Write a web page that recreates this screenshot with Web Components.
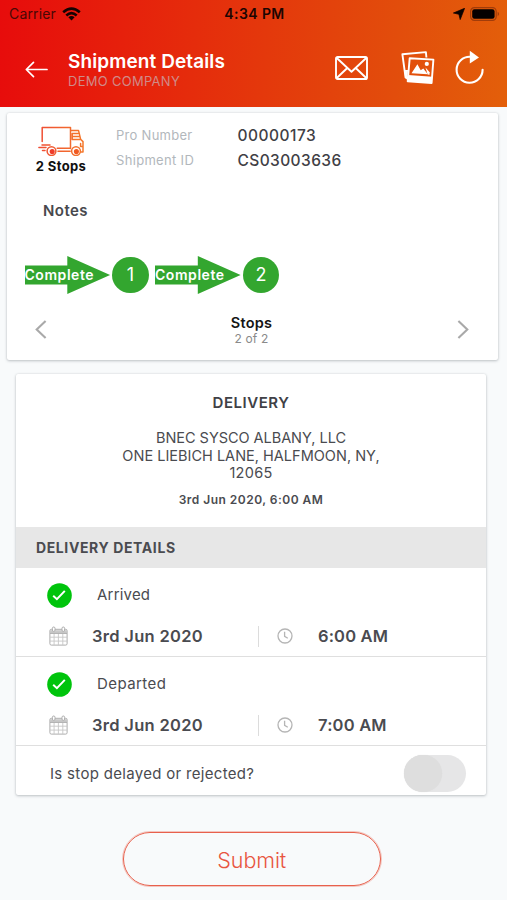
<!DOCTYPE html>
<html lang="en">
<head>
<meta charset="utf-8">
<title>Shipment Details</title>
<style>
  html, body { margin: 0; padding: 0; background: #f8fafb; }
  body { width: 507px; height: 900px; overflow: hidden; font-family: Inter, "Liberation Sans", sans-serif; color: #4a4b50; }
</style>
</head>
<body>
<shipment-screen></shipment-screen>
<script>
const define = (name, html, setup) => {
  const template = document.createElement('template');
  template.innerHTML = html;
  customElements.define(name, class extends HTMLElement {
    constructor() {
      super();
      this.attachShadow({ mode: 'open' }).append(template.content.cloneNode(true));
    }
    connectedCallback() { if (setup) setup(this, this.shadowRoot); }
  });
};

/* Single line of text: size, weight, letter spacing and line height as attributes */
define('ui-text', `
<style>
  :host { display: block; white-space: nowrap; flex: none; }
</style><slot></slot>`, el => {
  const a = n => el.getAttribute(n);
  el.style.fontSize = a('size') + 'px';
  el.style.fontWeight = a('weight') || 400;
  el.style.letterSpacing = (a('track') || 0) + 'px';
  el.style.lineHeight = (a('line') || 20) + 'px';
  if (a('color')) el.style.color = a('color');
});

define('status-bar', `
<style>
  :host { display: grid; grid-template-columns: 1fr auto 1fr; height: 28px; align-items: center; padding: 0 7px 0 9px; color: #1c0502; }
  .left { display: flex; align-items: center; gap: 6px; }
  .right { display: flex; align-items: center; justify-content: flex-end; gap: 5px; }
  svg { display: block; }
</style>
<div class="left">
  <ui-text size="14" track="0.15" color="#4a0805">Carrier</ui-text>
  <svg width="19" height="14" viewBox="0 0 19 14"><g fill="none" stroke="#140302" stroke-width="2.6"><path d="M1.2 5.3 Q9.5 -2.1 17.8 5.3"/><path d="M4.3 8.5 Q9.5 3.9 14.7 8.5"/></g><path d="M6.4 10.3 Q9.5 7.9 12.6 10.3 L9.5 13.5Z" fill="#140302"/></svg>
</div>
<ui-text size="14" weight="600" track="0.4">4:34 PM</ui-text>
<div class="right">
  <svg width="12" height="12" viewBox="0 0 12 12"><path d="M11.6 .3 L7.2 11.6 L5.9 6.3 L.4 5Z" fill="#0a0200" stroke="#0a0200" stroke-width=".7" stroke-linejoin="round"/></svg>
  <svg width="30" height="14" viewBox="0 0 30 14"><rect x=".6" y=".6" width="25.6" height="12.8" rx="3.8" fill="none" stroke="#a13c0a" stroke-width="1.2"/><rect x="2.2" y="2.2" width="22.4" height="9.6" rx="2.2" fill="#050000"/><path d="M27.7 4.8 Q30.5 7 27.7 9.2Z" fill="#a13c0a"/></svg>
</div>`);

define('app-header', `
<style>
  :host { display: block; height: 106.5px; box-sizing: border-box; background: linear-gradient(93deg, #e70c0c 0%, #e6200c 24%, #e4380c 52%, #e24d0c 78%, #e35f0a 100%); }
  .bar { display: flex; height: 78px; box-sizing: border-box; padding: 22px 22px 0 25px; align-items: flex-start; }
  .back { margin: 11px 20px 0 0; }
  .titles { flex: 1; padding-top: 1px; }
  .icons { display: flex; align-items: flex-start; }
  svg { display: block; }
  .mail { margin-top: 6px; }
  .photos { margin: 1px 0 0 33px; }
  .reload { margin: 0 0 0 20px; }
</style>
<status-bar></status-bar>
<div class="bar">
  <svg class="back" width="23" height="17" viewBox="0 0 23 17" fill="none" stroke="#fff" stroke-width="1.7" stroke-linecap="round" stroke-linejoin="round"><path d="M22 8.5H1.5M8.5 1.3L1.3 8.5L8.5 15.7"/></svg>
  <div class="titles">
    <ui-text size="19" weight="600" track="0.1" line="22" color="#fff">Shipment Details</ui-text>
    <ui-text size="13" track="0.28" line="17" color="#d08a88">DEMO COMPANY</ui-text>
  </div>
  <div class="icons">
    <svg class="mail" width="33" height="24" viewBox="0 0 33 24" fill="none" stroke="#fff" stroke-width="1.9" stroke-linejoin="round"><rect x="1" y="1" width="31" height="22" rx="1.6"/><path d="M1.5 1.8L16.5 15.8L31.5 1.8M1.5 22.3L12.3 12M31.5 22.3L20.7 12"/></svg>
    <svg class="photos" width="34" height="34" viewBox="0 0 34 34"><path d="M7.5 26.5 L4.6 26.6 L1.4 3.3 L24.9 1.1 L25.4 6.5" fill="none" stroke="#fff" stroke-width="1.9" stroke-linejoin="round"/><path d="M3.5 19 L7 19 L6.3 29 L4 26.6Z" fill="#fff"/><path d="M8.7 7.2 L32.4 8.6 L30.6 32 L6.7 30.4Z" fill="none" stroke="#fff" stroke-width="1.9" stroke-linejoin="round"/><path d="M7.2 24 L31.3 25.7 L30.7 32 L6.7 30.4Z" fill="#fff"/><path d="M10.5 22.2 L16.4 13.3 L19.7 19.2 L22.3 17.6 L26.8 23.3Z" fill="#fff"/><path d="M24.5 16.6 L28.7 21.3 L28.4 24 L26.5 23.3Z" fill="#fff"/><circle cx="25.8" cy="12.9" r="2.1" fill="#fff"/></svg>
    <svg class="reload" width="30" height="34" viewBox="0 0 30 34"><path d="M15.2 6.8 A13 13 0 1 0 27.6 19.8" fill="none" stroke="#fff" stroke-width="2.1" stroke-linecap="round"/><path d="M14.8 .8 L24 7.4 L14.8 13.4Z" fill="#fff"/></svg>
  </div>
</div>`);

define('ui-card', `
<style>
  :host { display: block; box-sizing: border-box; background: #fff; border-radius: 2px; box-shadow: 0 1px 3px rgba(40,50,60,.26), 0 0 2px rgba(40,50,60,.12); }
</style><slot></slot>`);

define('truck-icon', `
<style>:host { display: block; } svg { display: block; }</style>
<svg width="47" height="30" viewBox="0 0 47 30" fill="none" stroke="url(#g)" stroke-width="1.5" stroke-linecap="round" stroke-linejoin="round">
  <defs><linearGradient id="g" gradientUnits="userSpaceOnUse" x1="0" y1="0" x2="47" y2="0"><stop offset="0" stop-color="#ef4b33"/><stop offset="1" stop-color="#f47a2c"/></linearGradient></defs>
  <path d="M4.2 15.5V1.4H32.5V22.6M32.5 4.4H40.5L42.6 13.2L45 15.6V26H42.6M34.2 7.6H40M34.2 7.6V13.6H42.4M34.5 10.4H40.8M42.6 17.5V20.5H45"/>
  <path d="M.9 21.6H8M4 18.9H12M4.5 24.4H7M19.2 22.2H32M20 25.2H32.2"/>
  <circle cx="13.5" cy="25.1" r="4.4"/><circle cx="38" cy="25.1" r="4.4"/>
  <circle cx="14.2" cy="25.6" r="1.8" fill="#ef3d2c" stroke="#ef3d2c"/><circle cx="38.4" cy="25.6" r="1.8" fill="#f05a22" stroke="#f05a22"/>
</svg>`);

/* One completed stop: arrow with its label, then the numbered disc */
define('stop-step', `
<style>
  :host { display: flex; align-items: center; gap: 2px; width: 124.5px; height: 38px; }
  .arrow { display: flex; width: 85.6px; height: 38px; align-items: center; background: #33a62f; clip-path: polygon(0 25%, 50% 25%, 50% 0, 100% 50%, 50% 100%, 50% 75%, 0 75%); }
  .disc { display: flex; width: 36.8px; height: 36.8px; border-radius: 50%; background: #33a62f; align-items: center; justify-content: center; }
</style>
<div class="arrow"><ui-text size="14" weight="600" track="0.55" line="22" color="#fff">Complete</ui-text></div>
<div class="disc"><ui-text size="18" color="#fff"><slot></slot></ui-text></div>`);

define('chevron-icon', `
<style>:host { display: block; } :host([dir="right"]) { transform: scaleX(-1); } svg { display: block; }</style>
<svg width="12" height="19" viewBox="0 0 12 19" fill="none" stroke="#a9a9a9" stroke-width="2.1"><path d="M10.6 1L1.7 9.5L10.6 18"/></svg>`);

define('summary-card', `
<style>
  :host { display: block; height: 247px; }
  .top { display: flex; height: 65px; box-sizing: border-box; padding: 13px 0 0 28.5px; }
  .stops { display: flex; flex-direction: column; align-items: center; width: 51px; }
  dl { display: grid; grid-template-columns: 121.5px auto; margin: -3px 0 0 29.5px; grid-auto-rows: 25px; align-items: center; }
  dd, dt { margin: 0; }
  dt { padding-bottom: 1px; }
  .notes { padding: 23px 0 0 36px; height: 56px; box-sizing: border-box; }
  .steps { display: flex; gap: 6px; padding: 22px 0 0 17.5px; }
  .nav { display: flex; justify-content: space-between; padding: 21px 28.5px 0 27.5px; }
  chevron-icon { margin-top: 4.5px; }
  .mid { display: flex; flex-direction: column; align-items: center; margin-right: 1px; }
</style>
<div class="top">
  <div class="stops"><truck-icon></truck-icon><ui-text size="13" weight="700" track="0.35" line="21" color="#111">2 Stops</ui-text></div>
  <dl>
    <dt><ui-text size="13" track="0.28" color="#b2b7bc">Pro Number</ui-text></dt><dd><ui-text size="15.5" weight="500" track="0.5" color="#3f4045">00000173</ui-text></dd>
    <dt><ui-text size="13" track="0.32" color="#b2b7bc">Shipment ID</ui-text></dt><dd><ui-text size="15.5" weight="500" track="0.4" color="#3f4045">CS03003636</ui-text></dd>
  </dl>
</div>
<div class="notes"><ui-text size="15" weight="600" track="0.45" color="#47484d">Notes</ui-text></div>
<div class="steps"><stop-step>1</stop-step><stop-step>2</stop-step></div>
<div class="nav">
  <chevron-icon></chevron-icon>
  <div class="mid"><ui-text size="14.5" weight="600" track="0.2" line="16" color="#151515">Stops</ui-text><ui-text size="12" track="0.15" line="16" color="#8a8a8a">2 of 2</ui-text></div>
  <chevron-icon dir="right"></chevron-icon>
</div>`);

define('check-badge', `
<style>:host { display: block; } svg { display: block; }</style>
<svg width="25" height="25" viewBox="0 0 25 25"><circle cx="12.5" cy="12.5" r="12.3" fill="#00c40c"/><path d="M6.2 12.8L9.9 16.2L17.8 7.9" fill="none" stroke="#fff" stroke-width="2"/></svg>`);

define('calendar-icon', `
<style>:host { display: block; } svg { display: block; }</style>
<svg width="19" height="20" viewBox="0 0 19 20" fill="none" stroke="#adadad" stroke-width="1"><rect x=".9" y="3.3" width="17.2" height="15.8" rx="1.4"/><path d="M1 4.2H18V7.2H1Z" fill="#c9c9c9" stroke="none"/><path d="M1 11.2H18M1 15.1H18M5.1 7.5V19M9.4 7.5V19M13.8 7.5V19" stroke="#c6c6c6" stroke-width=".9"/><path d="M1 7.4H18"/><rect x="3.4" y="1" width="2.6" height="4.4" rx="1.3" fill="#fff"/><rect x="13" y="1" width="2.6" height="4.4" rx="1.3" fill="#fff"/></svg>`);

define('clock-icon', `
<style>:host { display: block; } svg { display: block; }</style>
<svg width="16" height="16" viewBox="0 0 16 16" fill="none" stroke="#b5b5b5" stroke-width="1.3"><circle cx="8" cy="8" r="7"/><path d="M7.6 3.8V8.3L10.8 10.2"/></svg>`);

/* A stop event: a checked title row above its date and time */
define('stop-event', `
<style>
  :host { display: block; height: 89px; box-sizing: border-box; border-bottom: 1.5px solid #dfdfdf; padding-top: 14px; }
  .title { display: flex; align-items: center; height: 26px; padding-left: 31px; gap: 25px; }
  .when { display: grid; grid-template-columns: 43px 165.5px 20px 40.5px auto; align-items: center; height: 26px; margin-top: 15px; padding-left: 33px; }
  .rule { width: 1px; height: 21px; background: #dcdcdc; }
  clock-icon { margin-left: -.5px; }
</style>
<div class="title"><check-badge></check-badge><slot name="title"></slot></div>
<div class="when"><calendar-icon></calendar-icon><slot name="date"></slot><span class="rule"></span><clock-icon></clock-icon><slot name="time"></slot></div>`);

define('ui-toggle', `
<style>
  :host { display: flex; width: 62px; height: 37.5px; border-radius: 19px; background: #e6e6e7; }
  .knob { width: 37.5px; height: 37.5px; border-radius: 50%; background: #dedede; box-shadow: 0 0 1px #dcdcdc; }
</style><div class="knob"></div>`);

define('delivery-card', `
<style>
  :host { display: block; height: 421px; }
  .head { display: flex; flex-direction: column; align-items: center; height: 153px; box-sizing: border-box; padding-top: 19px; }
  .addr { display: flex; flex-direction: column; align-items: center; margin: 16px 0 9px; }
  .band { display: flex; height: 41px; align-items: center; padding-left: 20px; background: #e7e7e7; }
  .ask { display: flex; align-items: center; justify-content: space-between; height: 55px; padding: 0 20px 0 34px; }
</style>
<div class="head">
  <ui-text size="15" weight="600" track="0.52" color="#404146">DELIVERY</ui-text>
  <div class="addr">
    <ui-text size="14.5" track="-0.04" line="17.5">BNEC SYSCO ALBANY, LLC</ui-text>
    <ui-text size="14.5" track="0.01" line="17.5">ONE LIEBICH LANE, HALFMOON, NY,</ui-text>
    <ui-text size="14.5" track="0.3" line="17.5">12065</ui-text>
  </div>
  <ui-text size="12" weight="600" track="0.48" line="18">3rd Jun 2020, 6:00 AM</ui-text>
</div>
<div class="band"><ui-text size="14" weight="700" track="0.61">DELIVERY DETAILS</ui-text></div>
<stop-event>
  <ui-text slot="title" size="15" track="0.2" line="22">Arrived</ui-text>
  <ui-text slot="date" size="16.5" weight="600" track="0.3">3rd Jun 2020</ui-text>
  <ui-text slot="time" size="16.5" weight="600" track="0.15">6:00 AM</ui-text>
</stop-event>
<stop-event>
  <ui-text slot="title" size="15" track="0.42" line="22">Departed</ui-text>
  <ui-text slot="date" size="16.5" weight="600" track="0.3">3rd Jun 2020</ui-text>
  <ui-text slot="time" size="16.5" weight="600" track="0.2">7:00 AM</ui-text>
</stop-event>
<div class="ask"><ui-text size="15" track="0.31">Is stop delayed or rejected?</ui-text><ui-toggle></ui-toggle></div>`);

define('submit-button', `
<style>
  :host { display: block; }
  button { display: flex; width: 258.5px; height: 54px; box-sizing: border-box; align-items: center; justify-content: center; border: 1.6px solid #e8604c; outline: .4px solid #e8604c55; border-radius: 27px; background: none; padding: 2px 0 0; font-family: inherit; }
</style>
<button><ui-text size="21.5" weight="300" track="-0.1" line="28" color="#e8553f"><slot></slot></ui-text></button>`);

define('shipment-screen', `
<style>
  :host { display: flex; flex-direction: column; height: 900px; }
  .summary { margin: 6.5px 9px 0 7px; }
  .delivery { margin: 14px 21px 0 16px; }
  submit-button { margin: 37px 0 0 122.5px; }
</style>
<app-header></app-header>
<ui-card class="summary"><summary-card></summary-card></ui-card>
<ui-card class="delivery"><delivery-card></delivery-card></ui-card>
<submit-button>Submit</submit-button>`);
</script>
</body>
</html>
